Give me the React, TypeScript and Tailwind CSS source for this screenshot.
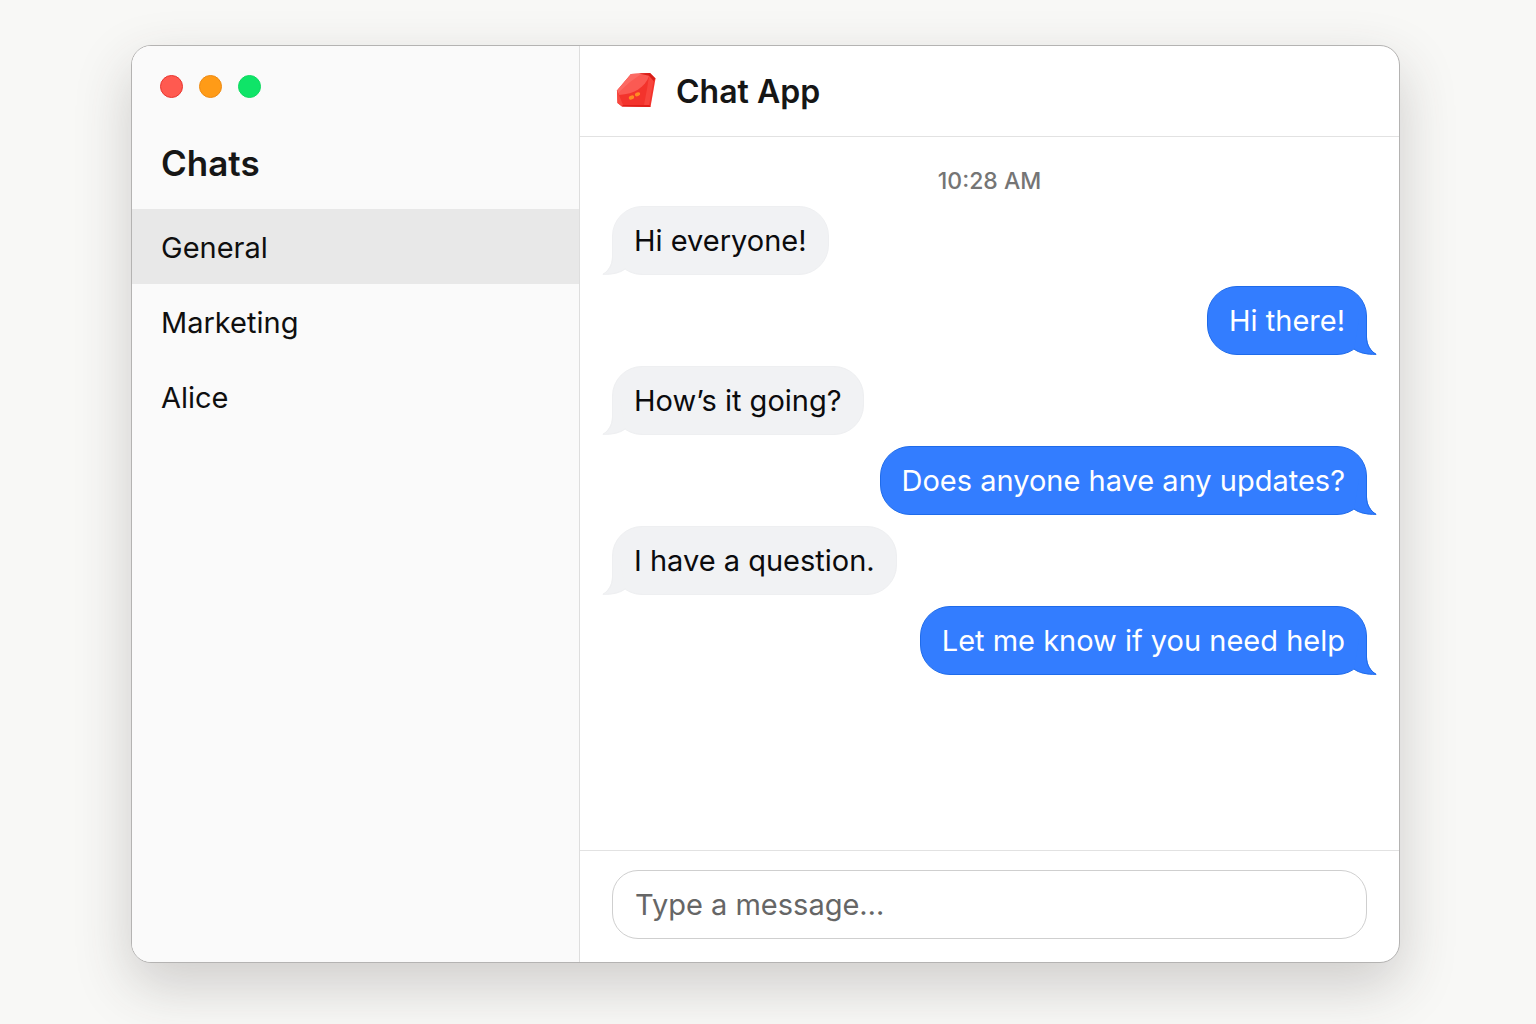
import { useState } from 'react';

interface Message {
  id: number;
  text: string;
  mine: boolean;
}

const chats = ['General', 'Marketing', 'Alice'];

const initialMessages: Message[] = [
  { id: 1, text: 'Hi everyone!', mine: false },
  { id: 2, text: 'Hi there!', mine: true },
  { id: 3, text: 'How’s it going?', mine: false },
  { id: 4, text: 'Does anyone have any updates?', mine: true },
  { id: 5, text: 'I have a question.', mine: false },
  { id: 6, text: 'Let me know if you need help', mine: true },
];

function GemLogo() {
  return (
    <svg viewBox="0 0 40 36" className="h-9 w-10 shrink-0" aria-hidden="true">
      <path d="M15 2 L34 1 L39.5 6.5 L34.5 35 L6 34.5 L1.5 31 L1 18.5 Z" fill="#f3332c" />
      <path d="M15 2 L34 1 L33 4 C29 15 19 22 3 23 L1 18.5 Z" fill="#fb5a53" />
      <path d="M15 2 L26 1.5 L14 10 L2 21 L1 18.5 Z" fill="#fd7a73" opacity="0.5" />
      <path d="M23 1.6 L34 1 L39.5 6.5 L37.5 9 L33 3.8 Z" fill="#d81e18" />
      <path d="M33 4 L37.5 9 L33 33 L28 33 L31 17 Z" fill="#f8453d" />
      <path d="M1 18.5 L3 23 L7 33 L6 34.5 L1.5 31 Z" fill="#f8483f" />
      <path d="M6 34.5 L7 33 L33.5 33 L34.5 35 Z" fill="#e01f19" />
      <ellipse cx="21.5" cy="22.3" rx="2.8" ry="1.9" transform="rotate(-22 21.5 22.3)" fill="#ff8a24" />
      <ellipse cx="15.5" cy="25.5" rx="2.8" ry="2" transform="rotate(-22 15.5 25.5)" fill="#ff8a24" />
    </svg>
  );
}

function Bubble({ text, mine }: { text: string; mine: boolean }) {
  return (
    <li
      className={`relative rounded-[30px] border px-[21px] pt-[17px] pb-4 text-[29px] leading-[34px] ${
        mine
          ? 'self-end border-[#1f6bea] bg-[#337dff] text-white'
          : 'self-start border-[#eeeff1] bg-[#f1f2f4] text-[#0b0b0d]'
      }`}
    >
      {text}
      <svg
        viewBox="0 0 30 36"
        className={`absolute -bottom-px h-9 w-[30px] ${
          mine ? '-right-[11px] text-[#337dff]' : '-left-[11px] -scale-x-100 text-[#f1f2f4]'
        }`}
        aria-hidden="true"
      >
        <path d="M20 0 V18 C20 26 24 32 30 35.5 C20 36 12 34 7 30 L12 0 Z" fill="currentColor" />
        <path
          d="M19.5 0 V18 C19.5 26 23.5 32 29 35.3 C20 35.5 12 34 7 30"
          fill="none"
          className={mine ? 'stroke-[#1f6bea]' : 'stroke-[#eeeff1]'}
        />
      </svg>
    </li>
  );
}

export default function App() {
  const [activeChat, setActiveChat] = useState('General');
  const [messages, setMessages] = useState(initialMessages);
  const [draft, setDraft] = useState('');

  function handleSubmit(e: React.FormEvent) {
    e.preventDefault();
    if (!draft.trim()) return;
    setMessages([...messages, { id: messages.length + 1, text: draft, mine: true }]);
    setDraft('');
  }

  return (
    <div className="flex min-h-screen bg-[#f8f8f6] pt-[45px] pr-[136px] pb-[61px] pl-[131px] font-['Inter',sans-serif] text-[#161616]">
      <div className="flex flex-1 overflow-hidden rounded-[20px] border border-[#b4b3b2] bg-white shadow-[0_22px_56px_rgba(60,50,50,0.22)]">
        <aside className="w-[448px] shrink-0 border-r border-[#dedede] bg-[#fafafa]">
          <div className="flex gap-4 px-7 pt-[29px]">
            <button type="button" aria-label="Close" className="size-[23px] rounded-full border border-[#e9352f] bg-[#ff5a50]" />
            <button type="button" aria-label="Minimize" className="size-[23px] rounded-full border border-[#ee8a12] bg-[#ff9b17]" />
            <button type="button" aria-label="Zoom" className="size-[23px] rounded-full border border-[#0fd960] bg-[#0fe468]" />
          </div>
          <h1 className="mt-[42px] mb-[23px] px-[29px] text-[35px] leading-[46px] font-semibold">Chats</h1>
          <nav>
            {chats.map((chat) => (
              <button
                key={chat}
                type="button"
                onClick={() => setActiveChat(chat)}
                className={`block h-[75px] w-full px-[29px] pt-0.5 text-left text-[29px] leading-9 text-[#0f0f0f] ${
                  chat === activeChat ? 'bg-[#e8e8e8]' : ''
                }`}
              >
                {chat}
              </button>
            ))}
          </nav>
        </aside>

        <main className="flex min-w-0 flex-1 flex-col">
          <header className="flex h-[91px] items-start gap-5 border-b border-[#e2e2e2] px-9 pt-[26px]">
            <GemLogo />
            <h2 className="text-[32px] leading-10 font-semibold">Chat App</h2>
          </header>

          <div className="flex-1 px-8 pt-7">
            <p className="mb-[9px] text-center text-[23px] leading-8 font-medium text-[#757575]">10:28 AM</p>
            <ul className="flex flex-col gap-[11px]">
              {messages.map((message) => (
                <Bubble key={message.id} text={message.text} mine={message.mine} />
              ))}
            </ul>
          </div>

          <form onSubmit={handleSubmit} className="border-t border-[#e2e2e2] px-8 pt-[19px] pb-[23px]">
            <input
              type="text"
              aria-label="Message"
              value={draft}
              onChange={(e) => setDraft(e.target.value)}
              placeholder="Type a message…"
              className="block h-[69px] w-full rounded-[26px] border border-[#cfcfcf] bg-white px-[22px] text-[29px] outline-none placeholder:text-[#666666]"
            />
          </form>
        </main>
      </div>
    </div>
  );
}
